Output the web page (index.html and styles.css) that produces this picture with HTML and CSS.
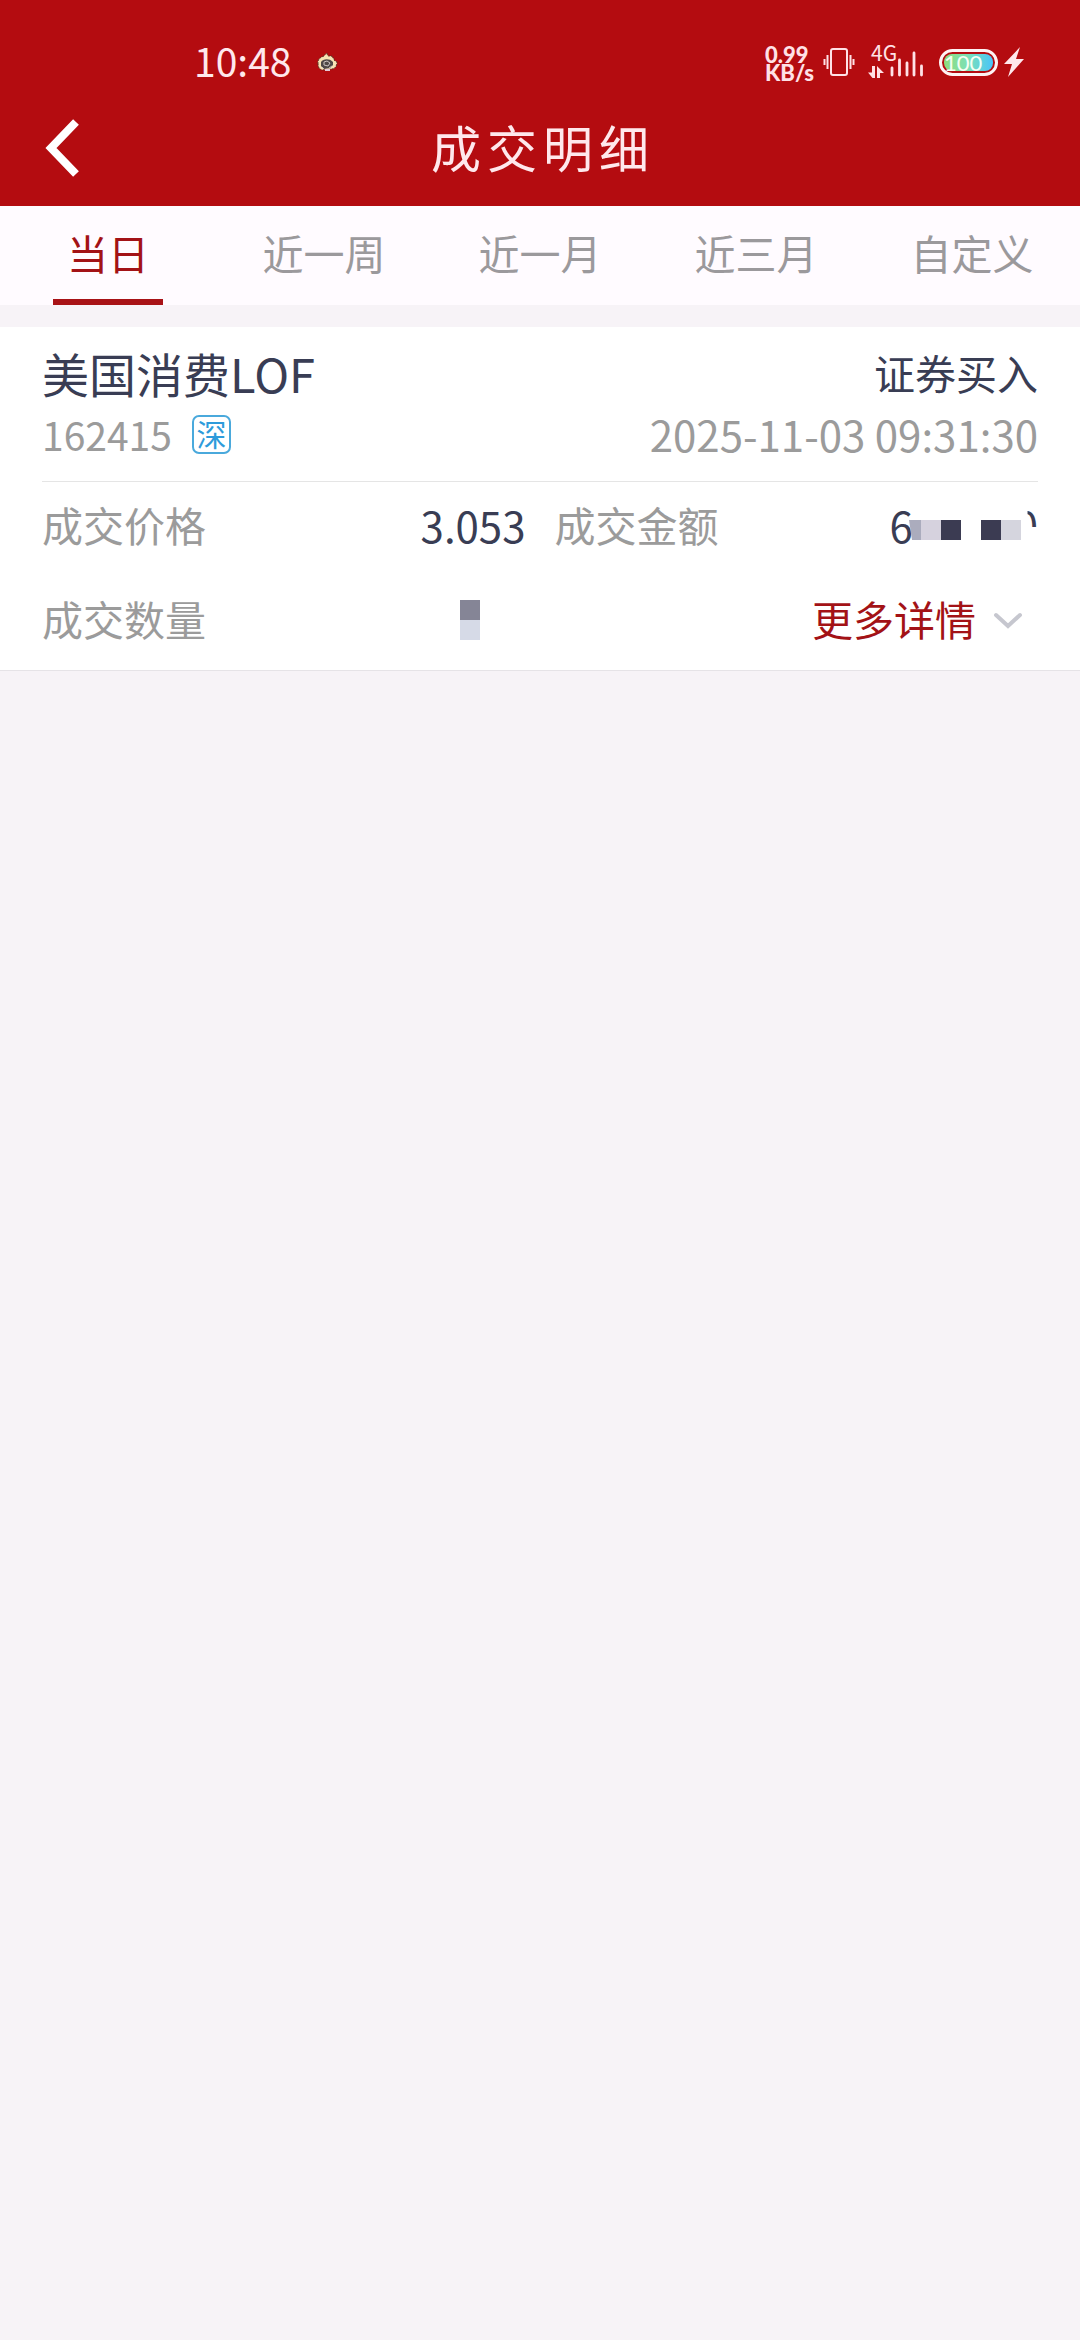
FILE: index.html
```html
<!DOCTYPE html>
<html lang="zh-CN">
<head>
<meta charset="utf-8">
<meta name="viewport" content="width=device-width, initial-scale=1">
<title>成交明细</title>
<link rel="stylesheet" href="styles.css">
</head>
<body>
<header class="header">
  <div class="status">
    <span class="clock">10:48</span>
    <svg class="app-icon" width="22" height="20" viewBox="0 0 22 20" aria-hidden="true">
      <path d="M2 12C1 7 5 5 8 4c1-1 1-2 3-3 0 2 1 3 2 3l3 0c0 2 1 2 2 2l0 2 3 2c0 4-2 7-5 7L6 18C3 17 2 15 2 12z" fill="#f6e3b4" stroke="#5a3023" stroke-width="1" stroke-dasharray="2 1"/>
      <path d="M5 10c2-3 8-4 12 0l0 3-3 3-6 1-3-3z" fill="#4f4947"/>
      <path d="M8 10l3-1 3 2-2 3-4-1zM6 15l2 2M13 16l3-2" fill="none" stroke="#c9c3c0" stroke-width="1"/>
      <path d="M9 17h5v2H9z" fill="#e4c9d6"/>
    </svg>
    <div class="status-right">
      <div class="speed"><span>0.99</span><span>KB/s</span></div>
      <svg class="vibrate" width="32" height="30" viewBox="0 0 32 30" fill="none" stroke="#ffe1e6" stroke-width="2" aria-hidden="true">
        <rect x="8" y="2" width="16" height="26" rx="2"/>
        <path d="M1.500 12v6M4.500 8v14M27.500 8v14M30.500 12v6"/>
      </svg>
      <svg class="signal" width="58" height="52" viewBox="0 -8 58 52" aria-hidden="true">
        <text x="4" y="17" class="signal-type">4G</text>
        <path d="M5 22h3v12H5.500L1 28.500h4zM10 34V22l7 7h-4v5z" fill="#ffe1e6"/>
        <path d="M25 24v7M32.500 16v15M40 19v12M47 9v22M54.500 22v9" stroke="#ffe1e6" stroke-width="2.800" stroke-linecap="round"/>
      </svg>
      <div class="battery"><span class="battery-fill">100</span></div>
      <svg class="bolt" width="20" height="30" viewBox="0 0 20 30" aria-hidden="true"><path d="M16 0L0 17h8L4 30 20 12h-8z" fill="#ffe8ec"/></svg>
    </div>
  </div>
  <nav class="titlebar">
    <button class="back" type="button" aria-label="返回">
      <svg width="36" height="60" viewBox="0 0 36 60" aria-hidden="true"><path d="M32 4L7 30l25 26" fill="none" stroke="#fff" stroke-width="8"/></svg>
    </button>
    <h1 class="title">成交明细</h1>
  </nav>
</header>

<main>
  <div class="tabs" role="tablist">
    <button class="tab tab-active" type="button" role="tab" aria-selected="true"><span class="tab-label">当日</span></button>
    <button class="tab" type="button" role="tab"><span class="tab-label">近一周</span></button>
    <button class="tab" type="button" role="tab"><span class="tab-label">近一月</span></button>
    <button class="tab" type="button" role="tab"><span class="tab-label">近三月</span></button>
    <button class="tab" type="button" role="tab"><span class="tab-label">自定义</span></button>
  </div>

  <article class="card">
    <div class="card-head">
      <div class="line line-name">
        <h2 class="name">美国消费LOF</h2>
        <span class="side">证券买入</span>
      </div>
      <div class="line line-code">
        <span class="code">162415</span>
        <span class="market">深</span>
        <time class="time">2025-11-03 09:31:30</time>
      </div>
    </div>
    <div class="fields">
      <div class="field">
        <span class="label">成交价格</span>
        <span class="value">3.053</span>
      </div>
      <div class="field">
        <span class="label">成交金额</span>
        <span class="value masked"><span>6</span><svg class="mask" width="112" height="20" viewBox="0 0 112 20" aria-hidden="true">
          <path d="M0 0h12v20H3z" fill="#abacbd"/>
          <path d="M12 0h20v20H12z" fill="#d6d2de"/>
          <path d="M32 0h20v20H32zM72 0h20v20H72z" fill="#3b3b52"/>
          <path d="M92 0h20v20H92z" fill="#d5d5de"/>
        </svg><span class="cut">0</span></span>
      </div>
      <div class="field">
        <span class="label">成交数量</span>
        <svg class="mask-qty" width="20" height="40" viewBox="0 0 20 40" aria-hidden="true">
          <path d="M0 0h20v20H0z" fill="#858596"/>
          <path d="M0 20h20v20H0z" fill="#d6dae7"/>
        </svg>
      </div>
      <div class="field field-more">
        <button class="more" type="button">更多详情
          <svg class="chevron" width="32" height="20" viewBox="0 0 32 20" aria-hidden="true"><path d="M4 4l12 11L28 4" fill="none" stroke="#c6c7cf" stroke-width="4" stroke-linecap="round"/></svg>
        </button>
      </div>
    </div>
  </article>
</main>
</body>
</html>
```
FILE: styles.css
```css
* {
  box-sizing: border-box;
}

body {
  margin: 0;
  min-height: 100vh;
  background: #f7f3f7;
  color: #393d54;
  font-family: "Noto Sans CJK SC", "Noto Sans", sans-serif;
  font-size: 41px;
}

button {
  border: 0;
  padding: 0;
  background: none;
  color: inherit;
  font: inherit;
}

svg {
  display: block;
  flex: none;
}

.header {
  background: #b40c10;
  color: #ffe8ec;
}

.status {
  display: flex;
  align-items: center;
  height: 90px;
  padding: 34px 56px 0 194px;
}

.clock {
  font-size: 39px;
  line-height: 52px;
  padding-bottom: 4px;
}

.app-icon {
  margin-left: 25px;
}

.status-right {
  display: flex;
  align-items: center;
  margin-left: auto;
}

.speed {
  display: flex;
  flex-direction: column;
  width: 48px;
  margin-right: 10px;
  padding-top: 4px;
  color: #ffe1e6;
  font-family: Lato, "Noto Sans", sans-serif;
  font-size: 22px;
  font-weight: 900;
  line-height: 18px;
}

.vibrate {
  margin-right: 12px;
}

.signal {
  margin-right: 14px;
}

.signal-type {
  fill: #ffe1e6;
  font-size: 21px;
}

.battery {
  width: 59px;
  height: 27px;
  margin-right: 6px;
  padding: 2px;
  border: 3px solid #fff3f4;
  border-radius: 14px;
}

.battery-fill {
  display: block;
  height: 17px;
  border-radius: 8px;
  background: linear-gradient(90deg, #8fdc7c, #7be0b8 50%, #48c4fb);
  color: #f4fff4;
  font-family: Lato, "Noto Sans", sans-serif;
  font-size: 22px;
  line-height: 17px;
}

.titlebar {
  display: grid;
  grid-template-columns: 80px 1fr 80px;
  align-items: center;
  height: 116px;
}

.back {
  display: flex;
  justify-content: flex-end;
}

.title {
  margin: 0;
  padding: 0 0 4px 6px;
  font-size: 50px;
  font-weight: 400;
  letter-spacing: 6px;
  line-height: 60px;
  text-align: center;
}

.tabs {
  display: grid;
  grid-template-columns: repeat(5, 1fr);
  margin-bottom: 22px;
  background: #fffbff;
}

.tab {
  display: flex;
  justify-content: center;
  color: #9b999c;
}

.tab-label {
  min-width: 110px;
  border-bottom: 6px solid transparent;
  line-height: 93px;
}

.tab-active {
  color: #a31216;
}

.tab-active .tab-label {
  border-color: #a81216;
}

.card {
  padding: 18px 42px 10px;
  border-bottom: 1px solid #e6e3e7;
  background: #fff;
}

.card-head {
  padding-bottom: 13px;
  border-bottom: 1px solid #e5e5e5;
}

.line {
  display: flex;
  align-items: center;
  justify-content: space-between;
}

.line-name {
  height: 54px;
}

.line-code {
  height: 69px;
  color: #9b9b9b;
}

.name {
  margin: 0;
  font-size: 47px;
  font-weight: 400;
}

.time,
.value {
  font-size: 42px;
}

.code {
  font-size: 39px;
}

.market {
  width: 39px;
  height: 39px;
  margin: 2px 0 0 20px;
  border: 2px solid #4aa9dc;
  border-radius: 7px;
  color: #2d9bdb;
  font-size: 30px;
  line-height: 32px;
  text-align: center;
}

.time {
  margin-left: auto;
}

.fields {
  display: grid;
  grid-template-columns: 1fr 1fr;
  grid-auto-rows: 84px;
  gap: 10px 29px;
}

.field {
  display: flex;
  align-items: center;
  justify-content: space-between;
}

.label {
  color: #9b9b9b;
}

.masked {
  display: flex;
  align-items: center;
}

.mask {
  margin: 12px -6px 0 -4px;
}

/* only the upper right part of the last digit shows beside the mask */
.cut {
  clip-path: inset(0 0 45% 55%);
}

.mask-qty {
  margin: 4px 46px 0 0;
}

.field-more {
  justify-content: flex-end;
}

.more {
  display: flex;
  align-items: center;
  gap: 16px;
  margin-right: 14px;
  color: #a31216;
}

.chevron {
  margin-top: 6px;
}
```
